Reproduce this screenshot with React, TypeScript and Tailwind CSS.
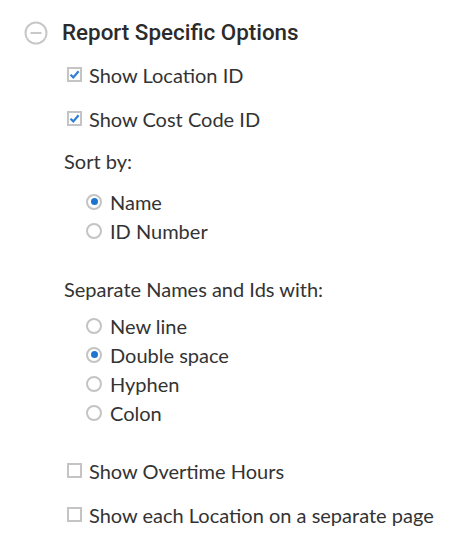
import React from "react";

const lato = { fontFamily: "Lato, 'Open Sans', sans-serif" };

function CircleMinus() {
    return (
        <svg width="24" height="24" viewBox="0 0 24 24" className="shrink-0">
            <circle cx="12" cy="12" r="10.5" fill="none" stroke="#c8c8c8" strokeWidth="2" />
            <line x1="6.5" y1="12" x2="17.5" y2="12" stroke="#c8c8c8" strokeWidth="2" />
        </svg>
    );
}

function Checkbox({ checked }: { checked: boolean }) {
    return (
        <span className="w-[15px] h-[15px] border-2 border-[#c4c4c4] bg-white flex items-center justify-center shrink-0">
            {checked && (
                <svg width="11" height="11" viewBox="0 0 11 11">
                    <path d="M1.5 5.8 L4.3 8.4 L9.6 2.2" fill="none" stroke="#2f7fd3" strokeWidth="2.2" />
                </svg>
            )}
        </span>
    );
}

function Radio({ checked }: { checked: boolean }) {
    return (
        <span className="w-[16px] h-[16px] rounded-full border-2 border-[#c4c4c4] bg-white flex items-center justify-center shrink-0">
            {checked && <span className="w-[7px] h-[7px] rounded-full bg-[#1f74d0]" />}
        </span>
    );
}

function CheckRow({ label, checked, className = "" }: { label: string; checked: boolean; className?: string }) {
    return (
        <div className={`flex items-center h-[29px] pl-[67px] ${className}`}>
            <Checkbox checked={checked} />
            <span className="ml-[7px]">{label}</span>
        </div>
    );
}

function RadioRow({ label, checked }: { label: string; checked: boolean }) {
    return (
        <div className="flex items-center h-[29px] pl-[86px]">
            <Radio checked={checked} />
            <span className="ml-[8px]">{label}</span>
        </div>
    );
}

export default function App() {
    return (
        <div className="w-[467px] h-[548px] bg-white text-[#333333] text-[20px] pt-[18px]" style={lato}>
            {/* Header */}
            <div className="flex items-center h-[29px] pl-[24px]">
                <CircleMinus />
                <h2
                    className="ml-[14px] text-[22.4px] font-medium text-[#2b2b2b]"
                    style={{ fontFamily: "Roboto, sans-serif" }}
                >
                    Report Specific Options
                </h2>
            </div>

            <CheckRow label="Show Location ID" checked className="mt-[13px]" />
            <CheckRow label="Show Cost Code ID" checked className="mt-[15px]" />

            <div className="h-[29px] flex items-center pl-[64px] mt-[13px]">Sort by:</div>
            <div className="mt-[12px]">
                <RadioRow label="Name" checked />
                <RadioRow label="ID Number" checked={false} />
            </div>

            <div className="h-[29px] flex items-center pl-[64px] mt-[29px]">Separate Names and Ids with:</div>
            <div className="mt-[8px]">
                {[
                    ["New line", false],
                    ["Double space", true],
                    ["Hyphen", false],
                    ["Colon", false],
                ].map(([label, checked]) => (
                    <RadioRow key={label as string} label={label as string} checked={checked as boolean} />
                ))}
            </div>

            <CheckRow label="Show Overtime Hours" checked={false} className="mt-[29px]" />
            <CheckRow label="Show each Location on a separate page" checked={false} className="mt-[15px]" />
        </div>
    );
}
